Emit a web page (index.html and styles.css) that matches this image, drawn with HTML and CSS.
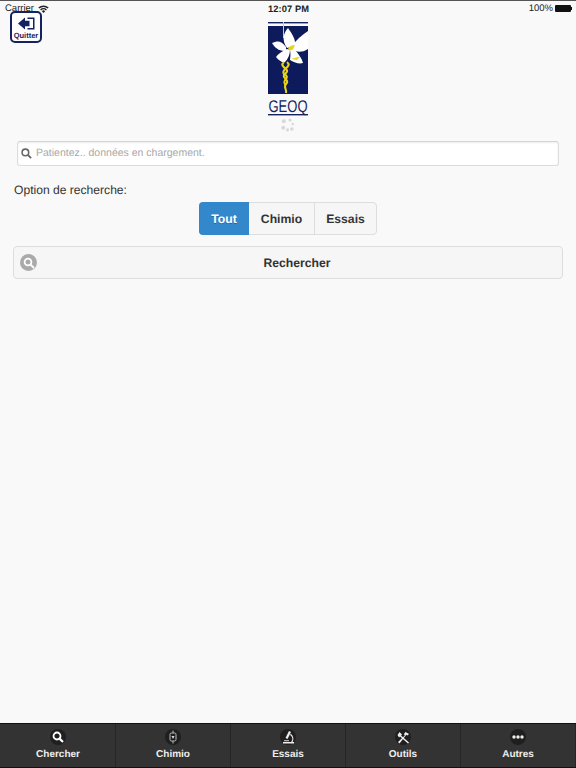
FILE: index.html
```html
<!DOCTYPE html>
<html lang="fr">
  <head>
    <meta charset="UTF-8" />
    <title>GEOQ</title>
    <link rel="stylesheet" href="styles.css">
  </head>
  <body>
    <div class="statusbar">
      <div class="status-left">
        <span>Carrier</span>
        <svg class="wifi" width="11" height="8" viewBox="0 0 11 8">
          <path d="M0.3 2.6A7.4 7.4 0 0 1 10.7 2.6L9.7 3.6A6 6 0 0 0 1.3 3.6Z" fill="#222" />
          <path d="M2.1 4.4A4.8 4.8 0 0 1 8.9 4.4L7.9 5.4A3.4 3.4 0 0 0 3.1 5.4Z" fill="#222" />
          <path d="M3.9 6.2A2.2 2.2 0 0 1 7.1 6.2L5.5 7.9Z" fill="#222" />
        </svg>
      </div>
      <div class="status-time">12:07 PM</div>
      <div class="status-right">
        <span>100%</span>
        <span class="battery"></span>
        <span class="battery-tip"></span>
      </div>
    </div>

    <a class="quit" href="#">
      <svg width="17" height="13" viewBox="0 0 17 13">
        <path d="M0 6.5L7 0.5V3.7H11.5V9.3H7V12.5Z" fill="#14235f" />
        <path d="M9.5 0.5H16.5V12.5H9.5V11H15V2H9.5Z" fill="#14235f" />
      </svg>
      <span>Quitter</span>
    </a>

    <header class="logo-wrap">
      <svg class="logo" width="40" height="94" viewBox="0 0 40 94">
        <rect x="0" y="0" width="40" height="1.4" fill="#14235f" />
        <rect x="0" y="4" width="40" height="68" fill="#0d1a5c" />
        <rect x="15" y="0" width="1" height="16" fill="#c9ccd8" />
        <g fill="#fff">
          <path d="M19 26C13 18 16 10 20 6C24 12 28 17 27 24Z" />
          <path d="M24 24C28 18 34 13 40 9V27C34 31 28 30 24 28Z" />
          <path d="M18 25C13 18 9 19 4 21C8 28 13 29 18 29Z" />
          <path d="M19 27C14 29 10 32 8 35C11 39 15 41 17 40C20 37 22 32 22 28Z" />
          <path d="M22 28C23 33 22 37 22 38C27 41 31 42 35 41C34 37 31 32 26 27Z" />
        </g>
        <path d="M20 27C21 24 24 23 27 23L25 27.5L21 28.5Z" fill="#e8d21c" />
        <path d="M23 37L32 34.5L29 38Z" fill="#e8d21c" />
        <g fill="none" stroke="#e8d21c" stroke-width="2.1">
          <path d="M16 40C10 45 23 47 18 51C11 55 23 58 18 62C15 65 19 67 18 71" />
          <path d="M19 40C25 45 12 47 16 52C24 56 12 58 18 63" />
        </g>
        <text x="0.5" y="89.5" textLength="39" lengthAdjust="spacingAndGlyphs" class="logo-text">GEOQ</text>
        <rect x="0" y="92" width="40" height="1.4" fill="#14235f" />
      </svg>
      <svg class="spinner" width="14" height="14" viewBox="0 0 14 14">
        <g fill="#d8d8d8">
          <circle cx="2.8" cy="3.2" r="2" />
          <circle cx="9" cy="2" r="1.6" />
          <circle cx="11.8" cy="6" r="1.3" />
          <circle cx="10.8" cy="11" r="1.8" />
          <circle cx="6.5" cy="11.8" r="1.6" />
          <circle cx="2.2" cy="9.8" r="2" />
        </g>
      </svg>
    </header>

    <main class="content">
      <div class="search-box">
        <svg width="11" height="11" viewBox="0 0 12 12">
          <circle cx="4.8" cy="4.8" r="3.6" fill="none" stroke="#666" stroke-width="1.7" />
          <path d="M7.5 7.5L11 11" stroke="#666" stroke-width="2" />
        </svg>
        <span class="placeholder">Patientez.. données en chargement.</span>
      </div>

      <div class="option-label">Option de recherche:</div>

      <div class="segment">
        <div class="seg seg-tout">Tout</div>
        <div class="seg seg-chimio">Chimio</div>
        <div class="seg seg-essais">Essais</div>
      </div>

      <div class="search-btn">
        <span class="search-btn-icon">
          <svg width="12" height="12" viewBox="0 0 12 12">
            <circle cx="5" cy="5" r="3.4" fill="none" stroke="#fff" stroke-width="1.8" />
            <path d="M7.6 7.6L11 11" stroke="#fff" stroke-width="2" />
          </svg>
        </span>
        Rechercher
      </div>
    </main>

    <nav class="tabbar">
      <div class="tab">
        <span class="tab-icon">
          <svg width="12" height="12" viewBox="0 0 12 12">
            <circle cx="5" cy="5" r="3.5" fill="none" stroke="#fff" stroke-width="1.8" />
            <path d="M7.6 7.6L11 11" stroke="#fff" stroke-width="2.2" />
          </svg>
        </span>
        <span>Chercher</span>
      </div>
      <div class="tab">
        <span class="tab-icon">
          <svg width="8" height="14" viewBox="0 0 8 14">
            <rect x="1" y="3" width="6" height="8" rx="1.5" fill="none" stroke="#bbb" stroke-width="1" />
            <path d="M4 0.5V3M4 11V13.5" stroke="#bbb" stroke-width="1" />
            <path d="M2.5 6H5.5L4 9Z" fill="#ddd" />
          </svg>
        </span>
        <span>Chimio</span>
      </div>
      <div class="tab">
        <span class="tab-icon">
          <svg width="14" height="15" viewBox="0 0 14 15">
            <path d="M8 1L10 2L6.5 9L4.5 8Z" fill="#eee" />
            <path d="M9 5C12 7 12 10 10 12H2V13.5H13V12H11.5C13.2 9.5 12.5 6 9.8 3.8Z" fill="#eee" />
            <path d="M3 10.3H8V11.2H3Z" fill="#eee" />
          </svg>
        </span>
        <span>Essais</span>
      </div>
      <div class="tab">
        <span class="tab-icon">
          <svg width="13" height="13" viewBox="0 0 13 13">
            <path d="M2.5 1L5 3.5L4 4.5L12 11.5L11 12.5L3 5.5L2 6.5L0.5 4Z" fill="#eee" />
            <path d="M8.5 1L12 3L10.5 4.5L9.3 3.8L2.5 12.5L1 11L7.8 4.5L7 3Z" fill="#eee" />
          </svg>
        </span>
        <span>Outils</span>
      </div>
      <div class="tab">
        <span class="tab-icon">
          <svg width="12" height="4" viewBox="0 0 12 4">
            <circle cx="2" cy="2" r="1.7" fill="#eee" />
            <circle cx="6" cy="2" r="1.7" fill="#eee" />
            <circle cx="10" cy="2" r="1.7" fill="#eee" />
          </svg>
        </span>
        <span>Autres</span>
      </div>
    </nav>
  </body>
</html>
```

FILE: styles.css
```css
html,
body {
  height: 100%;
}
body {
  margin: 0;
  padding: 0;
  position: relative;
  display: flex;
  flex-direction: column;
  height: 768px;
  overflow: hidden;
  background-color: #f9f9f9;
  color: #333333;
  font-family: "Liberation Sans", Arial, sans-serif;
  text-rendering: geometricPrecision;
}
.statusbar {
  display: flex;
  justify-content: space-between;
  align-items: center;
  height: 15px;
  padding: 0 4px 1px 5px;
  border-top: 1px solid #555555;
  font-size: 9.5px;
  color: #222222;
  box-sizing: content-box;
}
.status-left,
.status-right {
  display: flex;
  align-items: center;
  flex: 1;
}
.status-left span {
  margin-right: 4px;
}
.status-right {
  justify-content: flex-end;
}
.status-time {
  font-size: 9.3px;
  font-weight: bold;
  letter-spacing: 0.1px;
}
.battery {
  width: 16px;
  height: 7px;
  margin-left: 2px;
  background-color: #111111;
  border-radius: 1px;
}
.battery-tip {
  width: 1px;
  height: 3px;
  background-color: #111111;
}
.quit {
  position: absolute;
  top: 11px;
  left: 10px;
  width: 32px;
  height: 32px;
  padding-top: 4px;
  box-sizing: border-box;
  display: flex;
  flex-direction: column;
  align-items: center;
  background-color: #ffffff;
  border: 2px solid #14235f;
  border-radius: 5px;
  color: #14235f;
  font-size: 7.5px;
  font-weight: bold;
  line-height: 9px;
  text-decoration: none;
}
.quit svg {
  margin-bottom: 1px;
}
.logo-wrap {
  display: flex;
  flex-direction: column;
  align-items: center;
  padding-top: 5px;
}
.logo {
  display: block;
  overflow: visible;
}
.logo-text {
  font-family: "Liberation Sans", Arial, sans-serif;
  font-size: 17px;
  fill: #14235f;
}
.spinner {
  display: block;
  margin-top: 2px;
}
.content {
  flex: 1;
  padding: 9px 13px 0 13px;
}
.search-box {
  display: flex;
  align-items: center;
  height: 25px;
  margin: 0 4px;
  padding: 0 0 1px 3px;
  box-sizing: border-box;
  background-color: #ffffff;
  border: 1px solid #dddddd;
  border-top-color: #d4d4d4;
  border-radius: 3px;
  box-shadow: inset 0 1px 2px rgba(0, 0, 0, 0.08);
}
.placeholder {
  margin-left: 4px;
  font-size: 10.5px;
  color: #a8a8a8;
}
.option-label {
  margin: 17px 0 0 1px;
  font-size: 12.1px;
  line-height: 15px;
}
.segment {
  display: flex;
  width: 178px;
  height: 33px;
  margin: 4px auto 0 auto;
  box-sizing: border-box;
  background-color: #f6f6f6;
  border: 1px solid #dddddd;
  border-radius: 4px;
  font-size: 12.2px;
  font-weight: bold;
}
.seg {
  display: flex;
  align-items: center;
  justify-content: center;
}
.seg-tout {
  width: 50px;
  margin: -1px 0 -1px -1px;
  background-color: #3388cc;
  border-radius: 4px 0 0 4px;
  color: #ffffff;
  text-shadow: 0 1px 0 #1f6aa8;
}
.seg-chimio {
  width: 65px;
  border-right: 1px solid #dddddd;
}
.seg-essais {
  flex: 1;
}
.search-btn {
  position: relative;
  display: flex;
  align-items: center;
  justify-content: center;
  height: 33px;
  margin-top: 11px;
  padding-left: 18px;
  box-sizing: border-box;
  background-color: #f6f6f6;
  border: 1px solid #dddddd;
  border-radius: 4px;
  font-size: 12.2px;
  font-weight: bold;
}
.search-btn-icon {
  position: absolute;
  left: 6px;
  top: 7px;
  display: flex;
  align-items: center;
  justify-content: center;
  width: 17px;
  height: 17px;
  background-color: #aaaaaa;
  border-radius: 50%;
}
.tabbar {
  display: flex;
  height: 45px;
  padding-left: 1px;
  box-sizing: border-box;
  background-color: #333333;
  border-top: 1px solid #111111;
  border-bottom: 1px solid #111111;
}
.tab {
  flex: 1;
  display: flex;
  flex-direction: column;
  align-items: center;
  padding-top: 5px;
  box-sizing: border-box;
  border-right: 1px solid #262626;
  color: #eeeeee;
  font-size: 10px;
  font-weight: bold;
  line-height: 12px;
}
.tab-icon {
  display: flex;
  align-items: center;
  justify-content: center;
  width: 16px;
  height: 16px;
  margin-bottom: 4px;
  background-color: #1f1f1f;
  border-radius: 50%;
}
```
